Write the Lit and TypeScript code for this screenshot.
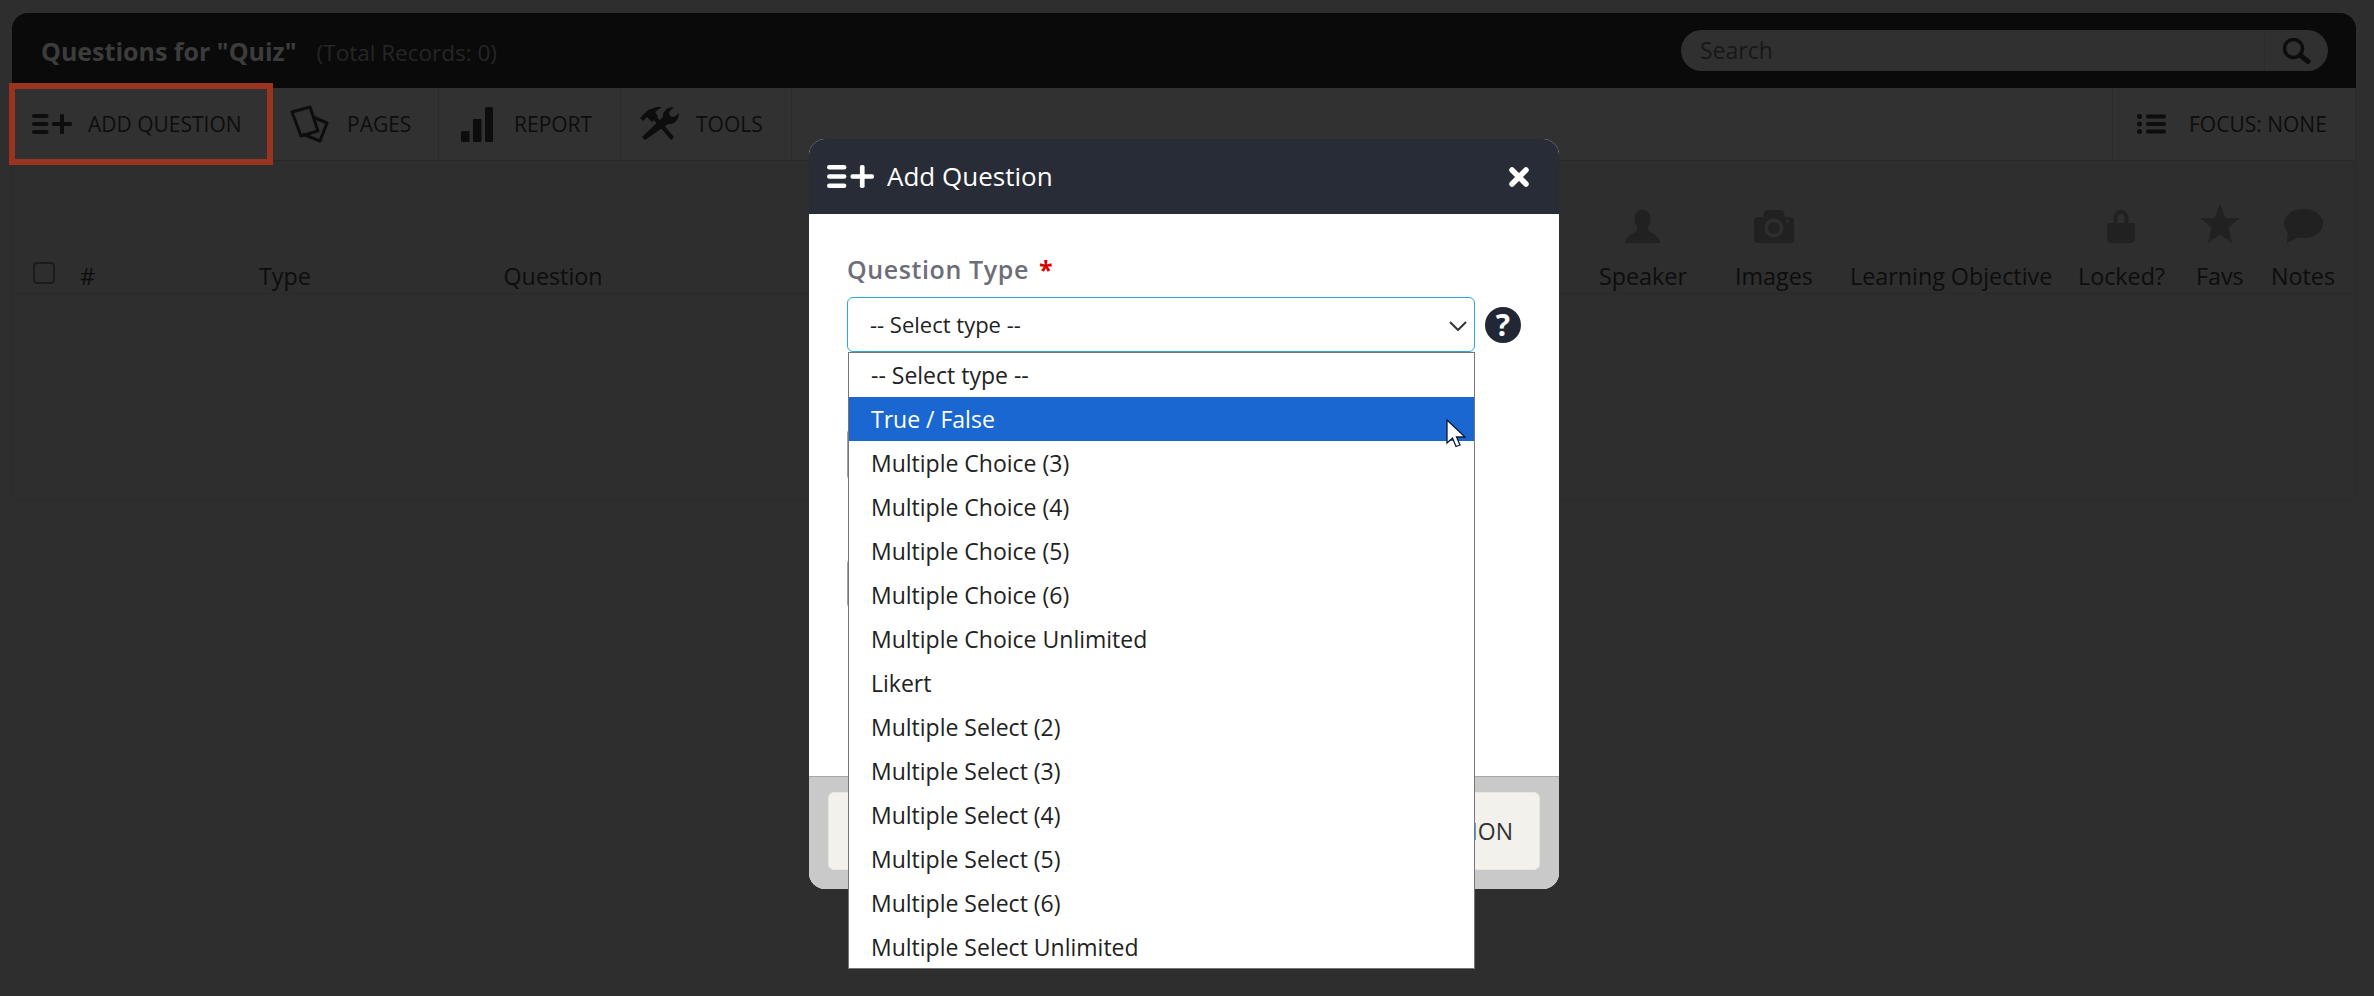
import { LitElement, html, css, svg } from "lit";
import { customElement } from "lit/decorators.js";

const ADD_ICON = svg`<rect x="0" y="0" width="16.500" height="4" rx="2"/><rect x="0" y="8" width="16.500" height="4" rx="2"/><rect x="0" y="16" width="16.500" height="4" rx="2"/><rect x="20" y="8" width="20" height="4" rx="1.500"/><rect x="28" y="0" width="4" height="20" rx="1.500"/>`;

const OPTIONS = [
  "-- Select type --", "True / False", "Multiple Choice (3)", "Multiple Choice (4)", "Multiple Choice (5)",
  "Multiple Choice (6)", "Multiple Choice Unlimited", "Likert", "Multiple Select (2)", "Multiple Select (3)",
  "Multiple Select (4)", "Multiple Select (5)", "Multiple Select (6)", "Multiple Select Unlimited",
];

const ICONS: Record<string, unknown> = {
  Speaker: svg`<svg width="35" height="33" viewBox="0 0 35 33"><path d="M17.500 0c5 0 8 3 8 8 0 4-1 7-2.500 9-.5 3 0 4 2 5 4 2 9 4 10 11H0c1-7 6-9 10-11 2-1 2.500-2 2-5C10.500 15 9.500 12 9.500 8c0-5 3-8 8-8z"/></svg>`,
  Images: svg`<svg width="40" height="33" viewBox="0 0 40 33"><path d="M3.500 7H9l1-4q.5-3 3-3h14q2.500 0 3 3l1 4h5.500A3.500 3.500 0 0 1 40 10.500v19a3.500 3.500 0 0 1-3.500 3.500h-33A3.500 3.500 0 0 1 0 29.500v-19A3.500 3.500 0 0 1 3.500 7z"/><circle cx="20" cy="18" r="9.500" fill="#2e2e2e"/><circle cx="20" cy="18" r="6"/><circle cx="33.500" cy="11" r="1.500" fill="#2e2e2e"/></svg>`,
  "Locked?": svg`<svg width="28" height="33" viewBox="0 0 28 33"><path fill="none" stroke="#212121" stroke-width="4" d="M8.500 15V8a5.500 6 0 0 1 11 0v7"/><path d="M3 13h22a3 3 0 0 1 3 3v12q0 5-5 5H5q-5 0-5-5V16a3 3 0 0 1 3-3z"/></svg>`,
  Favs: svg`<svg width="40" height="39" viewBox="0 0 40 39"><path d="M20 0l5.500 14H40L28.500 23.500 32 39l-12-8.500L8 39l3.500-15.500L0 14h14.500z"/></svg>`,
  Notes: svg`<svg width="39" height="34" viewBox="0 0 39 34"><ellipse cx="19.500" cy="14.500" rx="19.500" ry="14.500"/><path d="M4 21l-1 13 14-7z"/></svg>`,
};

const COLS: [string, number][] = [
  ["#", 179], ["Type", 244.5], ["Question", 1095.5], ["Speaker", 136], ["Images", 115],
  ["Learning Objective", 228], ["Locked?", 118], ["Favs", 75], ["Notes", 80],
];

@customElement("app-root")
export class AppRoot extends LitElement {
  static styles = css`
    :host { display: block; width: 2374px; height: 996px; background: #2e2e2e; font-family: "Open Sans", sans-serif; overflow: hidden; position: relative; }
    * { box-sizing: border-box; }
    .page { padding: 13px 18px 0 12px; }
    .card { height: 487px; border: 1px solid #2a2a2a; border-top: 0; border-radius: 16px 16px 0 0; display: flex; flex-direction: column; background: #2e2e2e; }
    .head { height: 75px; margin: 0 -1px; background: #0a0a0a; border-radius: 16px 16px 0 0; display: flex; align-items: center; justify-content: space-between; padding: 0 28px 0 29px; flex: none; }
    .title { font-size: 25px; font-weight: 700; color: #3c3c3c; white-space: nowrap; }
    .total { font-size: 22.500px; font-weight: 400; color: #262626; margin-left: 20px; }
    .search { width: 647px; height: 41px; border-radius: 21px; background: #303030; display: flex; align-items: stretch; color: #171717; font-size: 23px; }
    .search .q { flex: 1; padding-left: 19px; line-height: 41px; }
    .search .go { width: 64px; border-left: 1px solid #2b2b2b; display: flex; align-items: center; padding-left: 17px; }
    .tools { height: 73px; display: flex; justify-content: space-between; border-bottom: 1px solid #292929; background: #313131; flex: none; }
    .group { display: flex; }
    .tool { display: flex; align-items: center; border-right: 1px solid #2b2b2b; font-size: 21px; color: #0d0d0d; white-space: nowrap; }
    .tool.add { width: 260px; padding-left: 19px; gap: 16px; }
    .tool.pages { width: 166px; padding-left: 17px; gap: 18px; }
    .tool.report { width: 182px; padding-left: 22px; gap: 21px; }
    .tool.tts { width: 171px; padding-left: 19px; gap: 16px; }
    .tool.focus { width: 243px; border-right: 0; border-left: 1px solid #2b2b2b; padding-left: 24px; gap: 23px; }
    .thead { height: 133px; display: flex; align-items: flex-end; border-bottom: 1px solid #2a2a2a; padding-left: 20px; font-size: 23.300px; color: #0d0d0d; flex: none; }
    .check { width: 22px; height: 22px; border: 2px solid #1c1c1c; border-radius: 4px; margin: 0 25px 9px 0; flex: none; }
    .cell { flex: none; display: flex; }
    .col { display: inline-flex; flex-direction: column; align-items: center; white-space: nowrap; line-height: 33px; }
    .col svg { fill: #212121; margin-bottom: 17px; display: block; }
    .red { position: absolute; left: 9px; top: 83px; width: 264px; height: 82px; border: 6px solid #9a3420; }
    .modal { position: absolute; left: 809px; top: 139px; width: 750px; height: 750px; background: #fff; border-radius: 16px; display: flex; flex-direction: column; }
    .m-head { height: 75px; background: #282c37; border-radius: 16px 16px 0 0; display: flex; align-items: center; padding: 0 30px 0 18px; color: #fff; font-size: 26px; gap: 13px; flex: none; }
    .m-head .t { flex: 1; padding-bottom: 2px; }
    .m-body { flex: 1; padding: 37px 0 0 38px; }
    .label { font-size: 25px; font-weight: 600; color: #6e6e78; line-height: 36px; letter-spacing: .6px; white-space: nowrap; }
    .label b { color: #d90000; margin-left: 3px; font-weight: 700; }
    .row { display: flex; align-items: center; gap: 10px; margin-top: 10px; }
    .select { width: 628px; height: 55px; border: 1px solid #29a9e0; border-radius: 6px; display: flex; align-items: center; justify-content: space-between; font-size: 22px; color: #222; padding: 0 7px 2px 22px; background: #fff; }
    .select svg { margin-top: 5px; }
    .help { width: 36px; height: 36px; border-radius: 50%; background: #222736; color: #fff; display: flex; align-items: center; justify-content: center; font-weight: 700; font-size: 30px; }
    .ghost { width: 628px; height: 51px; border: 1px solid #a0a0a0; border-radius: 4px; margin-top: 77px; }
    .ghost + .ghost { height: 49px; margin-top: 79px; }
    .m-foot { height: 113px; flex: none; background: #c9c9c9; border-top: 1px solid #a8a8a8; border-radius: 0 0 16px 16px; padding: 15px 19px 19px; display: flex; gap: 40px; }
    .btn { flex: 1; background: #f2f1ec; border-radius: 6px; border: 1px solid #e8e7e2; display: flex; align-items: center; justify-content: flex-end; padding-right: 26px; font-size: 23px; color: #333; }
    .list { position: absolute; left: 848px; top: 352px; width: 627px; height: 617px; background: #fff; border: 1px solid #767676; font-size: 23px; color: #222; }
    .opt { height: 44px; padding-left: 22px; line-height: 44px; white-space: nowrap; }
    .opt.on { background: #1a67d2; color: #fff; }
    .cursor { position: absolute; left: 1446px; top: 419px; }
  `;

  render() {
    return html`
      <div class="page">
        <div class="card">
          <div class="head">
            <div class="title">Questions for "Quiz"<span class="total">(Total Records: 0)</span></div>
            <div class="search"><span class="q">Search</span>
              <span class="go"><svg width="29" height="26" viewBox="0 0 29 26" fill="none" stroke="#0d0d0d" stroke-width="3.500"><circle cx="11.500" cy="10.500" r="9"/><path d="M18 17l8 6.500" stroke-width="5" stroke-linecap="round"/></svg></span>
            </div>
          </div>
          <div class="tools">
            <div class="group">
              <div class="tool add"><svg width="40" height="20" viewBox="0 0 40 20" fill="#0d0d0d">${ADD_ICON}</svg>ADD QUESTION</div>
              <div class="tool pages"><svg width="39" height="38" viewBox="0 0 39 38" fill="none" stroke="#0d0d0d" stroke-width="3" stroke-linejoin="round"><path d="M2 7l18-5 8 24-17 5z"/><path d="M23 12l14 6-7 18-15-6-2-1"/></svg>PAGES</div>
              <div class="tool report"><svg width="32" height="35" viewBox="0 0 32 35" fill="#0d0d0d"><rect x="0" y="24" width="8.500" height="11" rx="1"/><rect x="12" y="12" width="8.500" height="23" rx="1"/><rect x="24" y="0" width="8" height="35" rx="1.500"/></svg>REPORT</div>
              <div class="tool tts"><svg width="40" height="34" viewBox="0 0 40 34" fill="#0d0d0d"><path d="M0 11L8 3l9-3h5l-7 5 3 4-6 6-5-5-4 4z"/><path d="M13 12l3-3 18 21-3 3z" /><path d="M5 33l-3-3 21-20c-1-5 4-10 11-10l-5 5 1 4 4 1 5-4c0 7-5 12-11 11z"/></svg>TOOLS</div>
            </div>
            <div class="group">
              <div class="tool focus"><svg width="29" height="20" viewBox="0 0 29 20" fill="#0d0d0d"><circle cx="2.500" cy="2.500" r="2.500"/><circle cx="2.500" cy="10" r="2.500"/><circle cx="2.500" cy="17.500" r="2.500"/><rect x="9" y=".5" width="20" height="4" rx="2"/><rect x="9" y="8" width="20" height="4" rx="2"/><rect x="9" y="15.500" width="20" height="4" rx="2"/></svg>FOCUS: NONE</div>
            </div>
          </div>
          <div class="thead">
            <div class="check"></div>
            ${COLS.map(([t, w]) => html`<div class="cell" style="width:${w}px"><div class="col">${ICONS[t] ?? ""}<span>${t}</span></div></div>`)}
          </div>
        </div>
      </div>
      <div class="red"></div>
      <div class="modal">
        <div class="m-head">
          <svg width="47" height="23" viewBox="0 0 40 20" fill="#fff" preserveAspectRatio="none">${ADD_ICON}</svg>
          <span class="t">Add Question</span>
          <svg width="20" height="20" viewBox="0 0 20 20" stroke="#fff" stroke-width="5.500" stroke-linecap="round"><path d="M3 3l14 14M17 3L3 17"/></svg>
        </div>
        <div class="m-body">
          <div class="label">Question Type <b>*</b></div>
          <div class="row">
            <div class="select">-- Select type --
              <svg width="18" height="10" viewBox="0 0 18 10" fill="none" stroke="#333" stroke-width="2"><path d="M1 1l8 8 8-8"/></svg>
            </div>
            <div class="help">?</div>
          </div>
          <div class="ghost"></div>
          <div class="ghost"></div>
        </div>
        <div class="m-foot"><div class="btn"></div><div class="btn">ADD QUESTION</div></div>
      </div>
      <div class="list">${OPTIONS.map((o, i) => html`<div class="opt ${i === 1 ? "on" : ""}">${o}</div>`)}</div>
      <svg class="cursor" width="20" height="29" viewBox="0 0 20 29"><path d="M1 1v23l5.500-5 3.500 8.500 4-1.500-3.500-8H19z" fill="#fff" stroke="#0b1a33" stroke-width="1.300"/></svg>
    `;
  }
}
